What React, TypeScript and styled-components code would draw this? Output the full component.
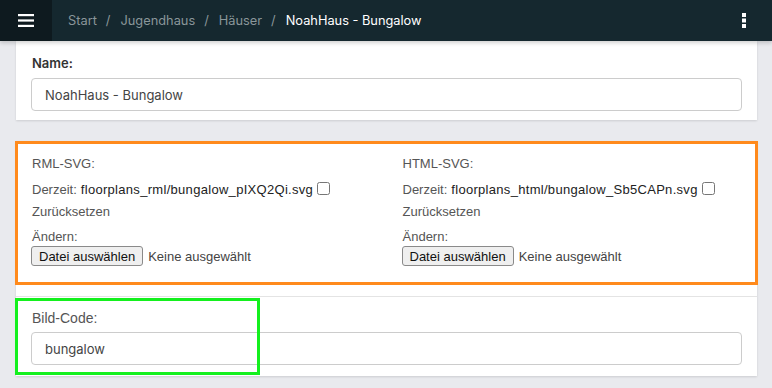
import React from "react";
import styled, { createGlobalStyle } from "styled-components";

const GlobalStyle = createGlobalStyle`
  html, body {
    margin: 0;
    padding: 0;
    background: #e9eaee;
    font-family: Inter, "Noto Sans", sans-serif;
  }
`;

const TopBar = styled.header`
  display: flex;
  align-items: center;
  height: 41px;
  background: #15282f;
  box-shadow: 0 2px 4px rgba(0, 0, 0, 0.18);
  position: relative;
  z-index: 2;
`;

const MenuButton = styled.div`
  display: flex;
  align-items: center;
  justify-content: center;
  width: 52px;
  height: 100%;
  background: #0e1a1f;
`;

const Crumbs = styled.nav`
  flex: 1;
  display: flex;
  align-items: center;
  padding-left: 16px;
  font-size: 12.8px;
  color: #8a969a;
`;

const Crumb = styled.span<{ $current?: boolean }>`
  color: ${(props) => (props.$current ? "#ffffff" : "#8a969a")};
`;

const Sep = styled.span`
  margin: 0 10px 0 9px;
  color: #8a969a;
`;

const Kebab = styled.div`
  display: flex;
  align-items: center;
  justify-content: center;
  width: 56px;
  height: 100%;
`;

const Main = styled.main`
  padding: 0 15px 12px 16px;
`;

const Card = styled.section<{ $mt?: number }>`
  background: #ffffff;
  width: 741px;
  margin-top: ${(props) => props.$mt || 0}px;
  box-shadow: 0 1px 2px rgba(0, 0, 0, 0.12);
`;

const Row = styled.div<{ $divider?: boolean; $pt?: number; $pb?: number }>`
  position: relative;
  padding: ${(props) => props.$pt ?? 11}px 15px ${(props) => props.$pb ?? 11}px 15px;
  border-bottom: ${(props) => (props.$divider ? "1px solid #e4e4e4" : "none")};
`;

const Highlight = styled.div<{ $color: string; $w?: string; $top: number; $bottom: number }>`
  position: absolute;
  left: -1px;
  top: ${(props) => props.$top}px;
  bottom: ${(props) => props.$bottom}px;
  width: ${(props) => props.$w || "calc(100% + 2px)"};
  box-sizing: border-box;
  border: 3px solid ${(props) => props.$color};
  pointer-events: none;
`;

const Label = styled.div<{ $bold?: boolean; $size?: number; $mb?: number }>`
  font-size: ${(props) => props.$size || 13}px;
  line-height: 20px;
  padding-left: 1px;
  margin-bottom: ${(props) => props.$mb ?? 5}px;
  font-weight: ${(props) => (props.$bold ? 600 : 400)};
  color: ${(props) => (props.$bold ? "#333" : "#555")};
  font-family: ${(props) => (props.$bold ? "Inter, sans-serif" : "'Liberation Sans', Arial, sans-serif")};
`;

const Input = styled.input`
  display: block;
  box-sizing: border-box;
  width: 711px;
  height: 33px;
  padding: 0 13px;
  border: 1px solid #cccccc;
  border-radius: 4px;
  font-family: Inter, sans-serif;
  font-size: 13px;
  color: #444;
  outline: none;
`;

const FileGrid = styled.div`
  display: grid;
  grid-template-columns: 1fr 1fr;
  column-gap: 31px;
  padding: 0 0 19px 1px;
  font-family: "Liberation Sans", Arial, sans-serif;
  font-size: 13px;
  color: #555;
`;

const FileCol = styled.div`
  display: flex;
  flex-direction: column;
`;

const Line = styled.div<{ $h?: number; $mt?: number }>`
  display: flex;
  align-items: center;
  height: ${(props) => props.$h || 20}px;
  margin-top: ${(props) => props.$mt || 0}px;
  white-space: nowrap;
`;

const FileLink = styled.span`
  color: #222;
  margin-left: 4px;
  letter-spacing: 0.3px;
`;

const Check = styled.input`
  width: 13px;
  height: 13px;
  margin: 0 0 2px 4px;
`;

const FilePicker = styled.div`
  display: flex;
  align-items: center;
  margin-left: -1px;
`;

const PickButton = styled.button`
  box-sizing: border-box;
  height: 20px;
  padding: 0 7px;
  border: 1px solid #8a8a8a;
  border-radius: 3px;
  background: #efefef;
  font-family: "Liberation Sans", Arial, sans-serif;
  font-size: 13px;
  color: #111;
`;

const PickText = styled.span`
  margin-left: 5px;
  color: #444;
`;

const FileField = ({ title, path }: { title: string; path: string }) => (
  <FileCol>
    <Line>{title}</Line>
    <Line $h={22} $mt={5}>
      Derzeit:<FileLink>{path}</FileLink>
      <Check type="checkbox" />
    </Line>
    <Line $h={22}>Zurücksetzen</Line>
    <Line $mt={4}>Ändern:</Line>
    <FilePicker>
      <PickButton>Datei auswählen</PickButton>
      <PickText>Keine ausgewählt</PickText>
    </FilePicker>
  </FileCol>
);

const App = () => {
  return (
    <>
      <GlobalStyle />
      <TopBar>
        <MenuButton>
          <svg width="16" height="13" viewBox="0 0 16 13">
            <rect x="0" y="0" width="16" height="2.2" fill="#fff" />
            <rect x="0" y="5.4" width="16" height="2.2" fill="#fff" />
            <rect x="0" y="10.8" width="16" height="2.2" fill="#fff" />
          </svg>
        </MenuButton>
        <Crumbs>
          <Crumb>Start</Crumb>
          <Sep>/</Sep>
          <Crumb>Jugendhaus</Crumb>
          <Sep>/</Sep>
          <Crumb>Häuser</Crumb>
          <Sep>/</Sep>
          <Crumb $current>NoahHaus - Bungalow</Crumb>
        </Crumbs>
        <Kebab>
          <svg width="4" height="15" viewBox="0 0 4 15">
            <rect x="0" y="0" width="4" height="4" fill="#fff" />
            <rect x="0" y="5.5" width="4" height="4" fill="#fff" />
            <rect x="0" y="11" width="4" height="4" fill="#fff" />
          </svg>
        </Kebab>
      </TopBar>
      <Main>
        <Card>
          <Row $pt={12} $pb={9}>
            <Label $bold>Name:</Label>
            <Input defaultValue="NoahHaus - Bungalow" />
          </Row>
        </Card>
        <Card $mt={21}>
          <Row $divider $pt={12}>
            <FileGrid>
              <FileField title="RML-SVG:" path="floorplans_rml/bungalow_pIXQ2Qi.svg" />
              <FileField title="HTML-SVG:" path="floorplans_html/bungalow_Sb5CAPn.svg" />
            </FileGrid>
            <Highlight $color="#ff8a1c" $top={0} $bottom={11} />
          </Row>
          <Row $pt={11} $pb={11}>
            <Label $size={14} $mb={4}>Bild-Code:</Label>
            <Input defaultValue="bungalow" />
            <Highlight $color="#14f01e" $w="245px" $top={1} $bottom={1} />
          </Row>
        </Card>
      </Main>
    </>
  );
};

export default App;
